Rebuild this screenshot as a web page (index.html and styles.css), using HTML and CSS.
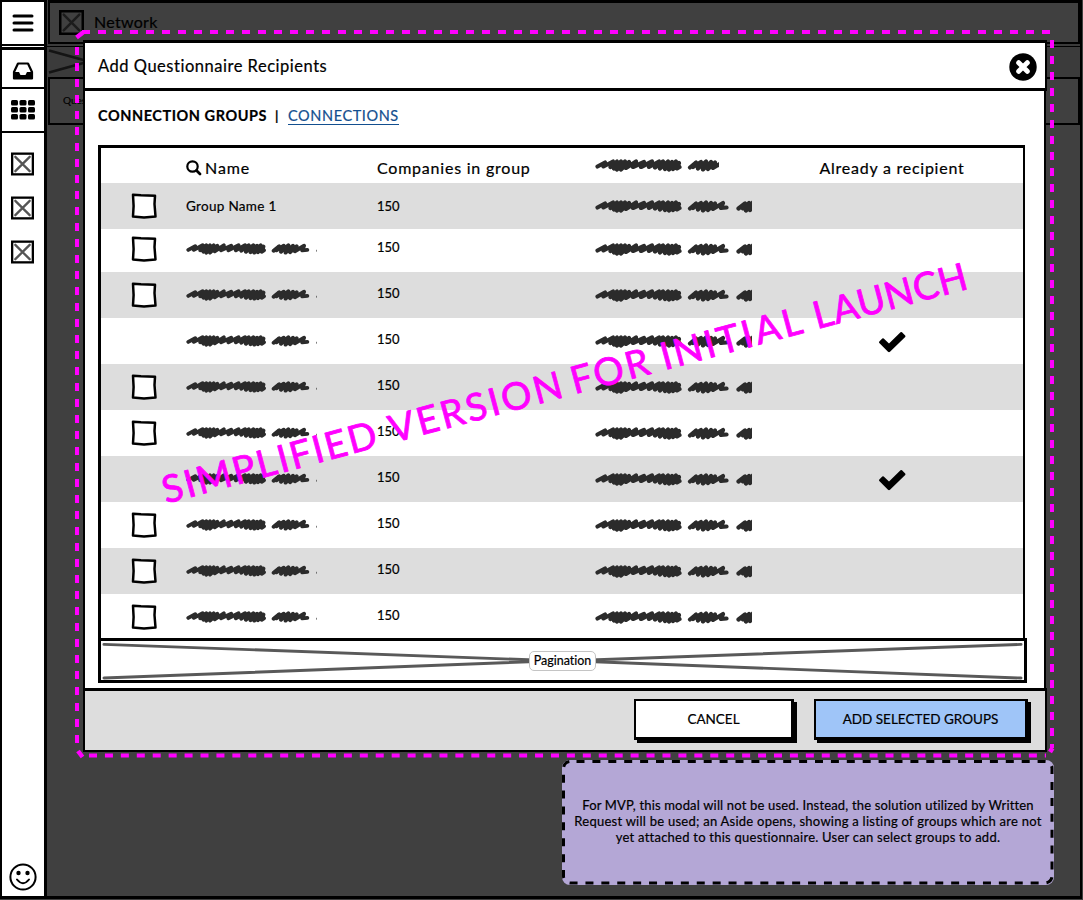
FILE: index.html
```
<!DOCTYPE html>
<html lang="en">
<head>
<meta charset="utf-8">
<title>Add Questionnaire Recipients</title>
<link rel="stylesheet" href="styles.css">
</head>
<body>
<svg class="defs" width="0" height="0" aria-hidden="true">
  <defs>
    <symbol id="scribble" viewBox="0 0 170 14">
      <path d="M2.500 8.500 10 4.500 8.500 8.500 18 3.500 15.500 9 22 3.500 19 10.500 26 3.500 22 11.500 30 3.500 26 11.500 34 4 31 10 41 3.500 38 9 49 4 46 9 57 3.500 54 9 64 3.500 60 9.500 68 3.500 65 10.500 73 3.500 70 11 77 4 74 11.500 81 3.500 78 11 84 5 82 10.500 84.500 9M95 9.500 101 4.500 98 9 106 4 103 10.500 111 3.500 108 11.500 116 4 113 11 120 4.500 118 10 128 4 126 9 131.500 8.500M143.500 9.500 150 4.500 148 9.500 154 4 151 11.500 158 3.500 155 11 162 3.500" fill="none" stroke="#2b2b2b" stroke-width="4.200" stroke-linecap="round" stroke-linejoin="round"/>
    </symbol>
    <symbol id="checkbox" viewBox="0 0 26 26">
      <path d="M2 1.800 10 2.300 24 2.800 23.500 11 24.500 23.500 13 24.500 2 23.500 2.600 13Z" fill="#fff" stroke="#000" stroke-width="2.500" stroke-linejoin="round"/>
    </symbol>
    <symbol id="check" viewBox="0 0 28 22">
      <path d="M1.300 10.500 4.300 7.500Q5 7 5.700 7.500L11 12.500 22.500 1.300Q23.300 .7 24 1.300L27.200 4.500Q27.800 5.200 27.200 6L12 20.800Q11 21.500 10 20.800L1.300 12Q.7 11.200 1.300 10.500Z"/>
    </symbol>
    <symbol id="image" viewBox="0 0 24 24">
      <rect x="1.200" y="1.200" width="21.600" height="21.600" fill="none" stroke="#000" stroke-width="2.400"/>
      <path d="M4.500 4.500 19.500 19.500M19.500 4.500 4.500 19.500" stroke="currentColor" stroke-width="2.400" stroke-linecap="round"/>
    </symbol>
  </defs>
</svg>

<div class="app">
  <nav class="sidebar">
    <div class="side-cell side-menu">
      <svg width="22" height="20" viewBox="0 0 22 20"><path d="M2 3H20M2 10H20M2 17H20" stroke="#000" stroke-width="3" stroke-linecap="round"/></svg>
    </div>
    <div class="side-cell side-inbox">
      <svg width="22" height="18" viewBox="0 0 22 18"><path d="M6 1.500H16L20 10V16.500H2V10Z" fill="#fff" stroke="#000" stroke-width="2.200" stroke-linejoin="round"/><path d="M2 10H7L8.500 13H13.500L15 10H20V16.500H2Z"/></svg>
    </div>
    <div class="side-cell side-grid">
      <svg width="26" height="20" viewBox="0 0 26 20"><g id="grid-row"><rect x="1" y="0" width="7" height="5.500" rx="1.500"/><rect x="9.500" y="0" width="7" height="5.500" rx="1.500"/><rect x="18" y="0" width="7" height="5.500" rx="1.500"/></g><use href="#grid-row" y="7"/><use href="#grid-row" y="14"/></svg>
    </div>
    <div class="side-images">
      <svg class="image-icon"><use href="#image"/></svg>
      <svg class="image-icon"><use href="#image"/></svg>
      <svg class="image-icon"><use href="#image"/></svg>
    </div>
    <svg class="smiley" width="28" height="28" viewBox="0 0 28 28"><circle cx="14" cy="14" r="12.600" fill="none" stroke="#000" stroke-width="2"/><circle cx="9.500" cy="10" r="2.200"/><circle cx="18.500" cy="10" r="2.200"/><path d="M8 16.500Q14 24 20 16.500" fill="none" stroke="#000" stroke-width="2" stroke-linecap="round"/></svg>
  </nav>
  <main class="main">
    <header class="bar bar-title"><svg class="bar-icon"><use href="#image"/></svg><span>Network</span></header>
    <div class="bar-cross"><svg width="100%" height="30"><path d="M2 3.500 80 25M2 25.500 80 4" stroke="#141414" stroke-width="2.500"/></svg></div>
    <div class="bar bar-sub">Questionnaire</div>
    <div class="canvas"></div>
  </main>
</div>

<section class="modal">
  <header class="modal-head">
    <h1>Add Questionnaire Recipients</h1>
    <svg width="28" height="28" viewBox="0 0 28 28"><circle cx="14" cy="14" r="13.700"/><path d="M9.700 9.700 18.300 18.300M18.300 9.700 9.700 18.300" stroke="#fff" stroke-width="5" stroke-linecap="round"/></svg>
  </header>
  <div class="modal-body">
    <div class="tabs"><b>CONNECTION GROUPS</b><span class="sep">|</span><a>CONNECTIONS</a></div>
    <div class="table">
      <div class="row head">
        <span></span>
        <span class="name-head"><svg width="16" height="16" viewBox="0 0 16 16"><circle cx="6.500" cy="6.500" r="5.200" fill="none" stroke="#000" stroke-width="2.200"/><path d="M10.500 10.500 14 14" stroke="#000" stroke-width="2.800" stroke-linecap="round"/></svg>Name</span>
        <span class="companies-head">Companies in group</span>
        <svg class="scribble scribble-head"><use href="#scribble" width="170" height="14"/></svg>
        <span class="recipient">Already a recipient</span>
      </div>
      <div class="row first"><svg class="box"><use href="#checkbox"/></svg><span class="group">Group Name 1</span><span class="num">150</span><svg class="scribble"><use href="#scribble" width="170" height="14"/></svg><span></span></div>
      <div class="row short"><svg class="box"><use href="#checkbox"/></svg><svg class="scribble-name" viewBox="0 0 142 14"><use href="#scribble" width="170" height="14"/></svg><span class="num">150</span><svg class="scribble"><use href="#scribble" width="170" height="14"/></svg><span></span></div>
      <div class="row"><svg class="box"><use href="#checkbox"/></svg><svg class="scribble-name" viewBox="0 0 142 14"><use href="#scribble" width="170" height="14"/></svg><span class="num">150</span><svg class="scribble"><use href="#scribble" width="170" height="14"/></svg><span></span></div>
      <div class="row"><span></span><svg class="scribble-name" viewBox="0 0 142 14"><use href="#scribble" width="170" height="14"/></svg><span class="num">150</span><svg class="scribble"><use href="#scribble" width="170" height="14"/></svg><svg class="check"><use href="#check"/></svg></div>
      <div class="row"><svg class="box"><use href="#checkbox"/></svg><svg class="scribble-name" viewBox="0 0 142 14"><use href="#scribble" width="170" height="14"/></svg><span class="num">150</span><svg class="scribble"><use href="#scribble" width="170" height="14"/></svg><span></span></div>
      <div class="row"><svg class="box"><use href="#checkbox"/></svg><svg class="scribble-name" viewBox="0 0 142 14"><use href="#scribble" width="170" height="14"/></svg><span class="num">150</span><svg class="scribble"><use href="#scribble" width="170" height="14"/></svg><span></span></div>
      <div class="row"><span></span><svg class="scribble-name" viewBox="0 0 142 14"><use href="#scribble" width="170" height="14"/></svg><span class="num">150</span><svg class="scribble"><use href="#scribble" width="170" height="14"/></svg><svg class="check"><use href="#check"/></svg></div>
      <div class="row"><svg class="box"><use href="#checkbox"/></svg><svg class="scribble-name" viewBox="0 0 142 14"><use href="#scribble" width="170" height="14"/></svg><span class="num">150</span><svg class="scribble"><use href="#scribble" width="170" height="14"/></svg><span></span></div>
      <div class="row"><svg class="box"><use href="#checkbox"/></svg><svg class="scribble-name" viewBox="0 0 142 14"><use href="#scribble" width="170" height="14"/></svg><span class="num">150</span><svg class="scribble"><use href="#scribble" width="170" height="14"/></svg><span></span></div>
      <div class="row"><svg class="box"><use href="#checkbox"/></svg><svg class="scribble-name" viewBox="0 0 142 14"><use href="#scribble" width="170" height="14"/></svg><span class="num">150</span><svg class="scribble"><use href="#scribble" width="170" height="14"/></svg><span></span></div>
    </div>
    <div class="pagination">
      <svg class="cross" viewBox="0 0 924 40" preserveAspectRatio="none"><path d="M3 3.500 462 20.500 921 3.500M3 38 462 20 921 38" fill="none" stroke="#595959" stroke-width="3" stroke-linecap="round"/></svg>
      <span>Pagination</span>
    </div>
  </div>
  <footer class="modal-foot">
    <button class="btn cancel">CANCEL</button>
    <button class="btn add">ADD SELECTED GROUPS</button>
  </footer>
</section>

<aside class="note">
  <svg class="note-frame" width="492" height="126"><rect x="1.500" y="1.500" width="488.500" height="121.500" rx="7" fill="none" stroke="#000" stroke-width="3" stroke-dasharray="8 7.900" stroke-dashoffset="-6"/></svg>
  <p><span class="n1">For MVP, this modal will not be used. Instead, the solution utilized by Written</span><br><span class="n2">Request will be used; an Aside opens, showing a listing of groups which are not</span><br><span class="n3">yet attached to this questionnaire. User can select groups to add.</span></p>
</aside>

<svg class="annotation" width="1083" height="900" viewBox="0 0 1083 900">
  <g fill="none" stroke="#f0f" stroke-width="4">
    <path d="M82 32H1050" stroke-dasharray="8 8"/>
    <path d="M77 47V750" stroke-dasharray="8 8"/>
    <path d="M1052 40V748" stroke-dasharray="8 8"/>
    <path d="M89 755.500H1046" stroke-dasharray="8 7.930"/>
    <path d="M76.500 37.500 83 32.500M78 751 82.500 757M1052.500 748 1050 752" stroke-width="4.500"/>
  </g>
  <g class="stamp" transform="translate(167 503.500) rotate(-15)">
    <text x="-1" y="0" textLength="221">SIMPLIFIED</text>
    <text x="234" y="0" textLength="178">VERSION</text>
    <text x="422" y="0" textLength="80">FOR</text>
    <text x="515" y="0" textLength="145">INITIAL</text>
    <text x="673" y="0" textLength="158">LAUNCH</text>
  </g>
</svg>
</body>
</html>
```

FILE: styles.css
```
* { box-sizing: border-box; }
body {
  margin: 0;
  width: 1083px;
  height: 900px;
  overflow: hidden;
  background: #404040;
  color: #000;
  font-family: Lato, "Open Sans", sans-serif;
  font-size: 13px;
  font-variant-ligatures: none;
  -webkit-text-stroke: 0.2px;
}
svg { display: block; }
.defs { position: absolute; }

.app { display: flex; height: 899px; padding-right: 1px; }
.sidebar {
  width: 47px;
  display: flex;
  flex-direction: column;
  align-items: center;
  background: #fff;
  border: solid #000;
  border-width: 2px 3px 3px 2px;
}
.side-cell { width: 42px; display: flex; align-items: center; justify-content: center; border-bottom: 2px solid #000; }
.side-menu { height: 44px; }
.side-inbox { height: 42px; margin-top: 1px; border-top: 3px solid #000; padding-top: 4px; }
.side-grid { height: 44px; padding-bottom: 1px; }
.side-images { display: flex; flex-direction: column; gap: 20px; padding-top: 19px; margin-right: 2px; }
.image-icon { width: 23px; height: 24px; color: #555; }
.smiley { margin-top: auto; margin-bottom: 5px; }

.main { flex: 1; min-width: 0; display: flex; flex-direction: column; border-right: 2px solid #000; border-bottom: 3px solid #000; }
.bar { border: 2px solid #000; display: flex; align-items: center; }
.bar-title { height: 44px; margin-left: 1px; border-top-width: 3px; font-size: 16px; gap: 10px; padding: 0 0 3px 9px; letter-spacing: 0.3px; }
.bar-icon { width: 25px; height: 25px; margin-top: 2px; color: #1c1c1c; }
.bar-cross { height: 33px; padding-top: 2px; background: #3b3b3b; overflow: hidden; }
.bar-cross svg { border-top: 1px solid #000; }
.bar-sub { height: 48px; margin-left: 1px; padding: 0 0 2px 13px; font-size: 10px; }
.canvas { flex: 1; }

.modal {
  position: absolute;
  left: 83px;
  top: 40px;
  width: 964px;
  height: 712px;
  display: flex;
  flex-direction: column;
}
.modal-head {
  height: 51px;
  display: flex;
  align-items: center;
  justify-content: space-between;
  padding: 2px 8px 0 13px;
  background: #fff;
  border: solid #000;
  border-width: 3px 2px 3px 2px;
}
.modal-head h1 { margin: 0 0 2px; font-size: 16.500px; font-weight: 400; letter-spacing: 0.520px; }
.modal-body { height: 597px; width: 963px; padding: 16px 17px 0 13px; background: #fff; border: solid #000; border-width: 0 2px; }
.tabs { height: 38px; display: flex; align-items: flex-start; font-size: 14.500px; line-height: 18px; }
.tabs b { width: 177px; letter-spacing: 0.550px; }
.tabs .sep { width: 13px; font-size: 13px; font-weight: 700; }
.tabs a { color: #134f8f; border-bottom: 1px solid #134f8f; line-height: 17px; letter-spacing: 0.600px; }
.table { width: 927px; height: 494px; overflow: hidden; border: solid #000; border-width: 3px 2px 0 3px; }
.row { display: grid; grid-template-columns: 85px 191px 218px 203px 188px; align-items: center; height: 46px; }
.row:nth-child(even) { background: #ddd; }
.row.short { height: 43px; }
.row.head { height: 35px; padding-top: 4px; font-size: 16px; }
.name-head { display: flex; align-items: center; gap: 3px; letter-spacing: 0.900px; }
.companies-head { letter-spacing: 0.780px; }
.recipient { text-align: center; letter-spacing: 0.750px; }
.box { width: 26px; height: 26px; margin-left: 30px; }
.short .box { margin-top: -3px; }
.group { font-size: 13.500px; letter-spacing: 0.300px; }
.num { font-size: 13px; padding-bottom: 4px; }
.first .num { padding-bottom: 0; }
.short .num { padding-bottom: 7px; }
.scribble { width: 157px; height: 14px; margin-top: -1px; overflow: hidden; }
.scribble-head { width: 124px; margin-top: -5px; }
.short .scribble, .short .scribble-name { margin-top: -4px; }
.scribble-name { width: 131px; height: 13px; margin-top: -1px; overflow: hidden; }
.check { width: 28px; height: 22px; justify-self: center; margin-top: 2px; }
.pagination { position: relative; width: 929px; height: 45px; display: flex; align-items: center; justify-content: center; border: solid #000; border-width: 3px; margin-top: -1px; background: #fff; }
.cross { position: absolute; inset: 0; width: 923px; height: 39px; }
.pagination span { position: relative; width: 67px; height: 20px; text-align: center; line-height: 17px; background: #fff; border: 1px solid #c4c4c4; border-radius: 5px; font-size: 12.500px; }
.modal-foot { height: 64px; display: flex; justify-content: flex-end; gap: 20px; padding: 8px 17px 0 0; background: #ddd; border: solid #000; border-width: 3px 2px 2px 2px; }
.btn { height: 41px; padding: 0; font-family: inherit; font-size: 13.500px; color: #000; border: 2px solid #000; border-right-width: 3px; border-bottom-width: 3px; box-shadow: 3px 3px 0 #000; }
.cancel { width: 160px; background: #fff; }
.add { width: 214px; background: #9fc5f8; }

.note {
  position: absolute;
  left: 562px;
  top: 760px;
  width: 492px;
  height: 125px;
  display: flex;
  align-items: center;
  justify-content: center;
  background: #b4a7d6;
  border-radius: 8px;
}
.note-frame { position: absolute; inset: 0; }
.note p { margin: 0 0 4px; font-size: 13px; line-height: 16px; text-align: center; white-space: nowrap; }
.n1 { letter-spacing: 0.170px; }
.n2 { letter-spacing: 0.250px; }
.n3 { letter-spacing: 0.240px; }
.annotation { position: absolute; left: 0; top: 0; pointer-events: none; }
.stamp { font-size: 38px; fill: #f0f; stroke: #f0f; stroke-width: 0.800px; stroke-linejoin: round; }
```
